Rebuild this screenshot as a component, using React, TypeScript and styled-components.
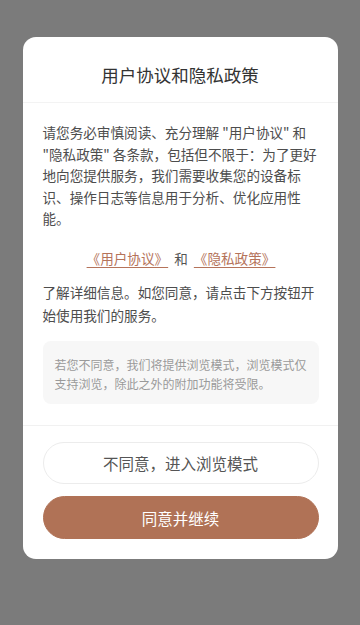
import React from 'react';
import styled, { createGlobalStyle } from 'styled-components';

const GlobalStyle = createGlobalStyle`
  html, body {
    margin: 0;
    padding: 0;
    background: #7b7b7b;
  }
  body {
    font-family: "Noto Sans CJK SC", "Noto Sans", sans-serif;
  }
`;

const Overlay = styled.div`
  min-height: 625px;
  padding-top: 37px;
  box-sizing: border-box;
  display: flex;
  justify-content: center;
  align-items: flex-start;
`;

const Card = styled.div`
  width: 315px;
  background: #fff;
  border-radius: 13px;
  overflow: hidden;
  display: flex;
  flex-direction: column;
`;

const Header = styled.div`
  padding: 26px 20px 15px;
  border-bottom: 1px solid #f3f3f3;
  text-align: center;
`;

const Title = styled.h2`
  margin: 0;
  font-size: 17.5px;
  line-height: 24px;
  font-weight: 400;
  color: #333;
`;

const Body = styled.div`
  padding: 19px 18px 21px 20px;
  border-bottom: 1px solid #f1f1f1;
`;

const Paragraph = styled.p<{ $top?: number }>`
  margin: ${(p) => p.$top ?? 0}px 0 0;
  font-size: 13.6px;
  line-height: ${(p) => (p.$top ? 22.5 : 21.5)}px;
  color: #4d4d4d;
`;

const LinkRow = styled.div`
  margin-top: 17px;
  text-align: center;
  font-size: 13.6px;
  line-height: 22px;
  color: #555;
`;

const DocLink = styled.a`
  color: #b5735a;
  text-decoration: underline;
  text-decoration-thickness: 1px;
  text-underline-offset: 3px;
  padding: 0 3px;
`;

const Notice = styled.div`
  margin-top: 15px;
  margin-right: 1px;
  padding: 13.5px 11px 11.5px 12px;
  background: #f7f7f7;
  border-radius: 8px;
  font-size: 12px;
  line-height: 19px;
  color: #9a9a9a;
`;

const Footer = styled.div`
  padding: 16px 19px 20px 20px;
  display: flex;
  flex-direction: column;
  gap: 12px;
`;

const Button = styled.button<{ $primary?: boolean }>`
  height: ${(p) => (p.$primary ? 43 : 42)}px;
  border-radius: 22px;
  font-family: inherit;
  font-size: 15.5px;
  cursor: pointer;
  border: 1px solid ${(p) => (p.$primary ? '#b07256' : '#ececec')};
  background: ${(p) => (p.$primary ? '#b07256' : '#fff')};
  color: ${(p) => (p.$primary ? '#fff' : '#555')};
`;

export default function App() {
  return (
    <>
      <GlobalStyle />
      <Overlay>
        <Card>
          <Header>
            <Title>用户协议和隐私政策</Title>
          </Header>
          <Body>
            <Paragraph>
              请您务必审慎阅读、充分理解 "用户协议" 和 "隐私政策" 各条款，包括但不限于：为了更好地向您提供服务，我们需要收集您的设备标识、操作日志等信息用于分析、优化应用性能。
            </Paragraph>
            <LinkRow>
              <DocLink href="#">《用户协议》</DocLink> 和 <DocLink href="#">《隐私政策》</DocLink>
            </LinkRow>
            <Paragraph $top={12.75}>
              了解详细信息。如您同意，请点击下方按钮开始使用我们的服务。
            </Paragraph>
            <Notice>
              若您不同意，我们将提供浏览模式，浏览模式仅支持浏览，除此之外的附加功能将受限。
            </Notice>
          </Body>
          <Footer>
            <Button>不同意，进入浏览模式</Button>
            <Button $primary>同意并继续</Button>
          </Footer>
        </Card>
      </Overlay>
    </>
  );
}
